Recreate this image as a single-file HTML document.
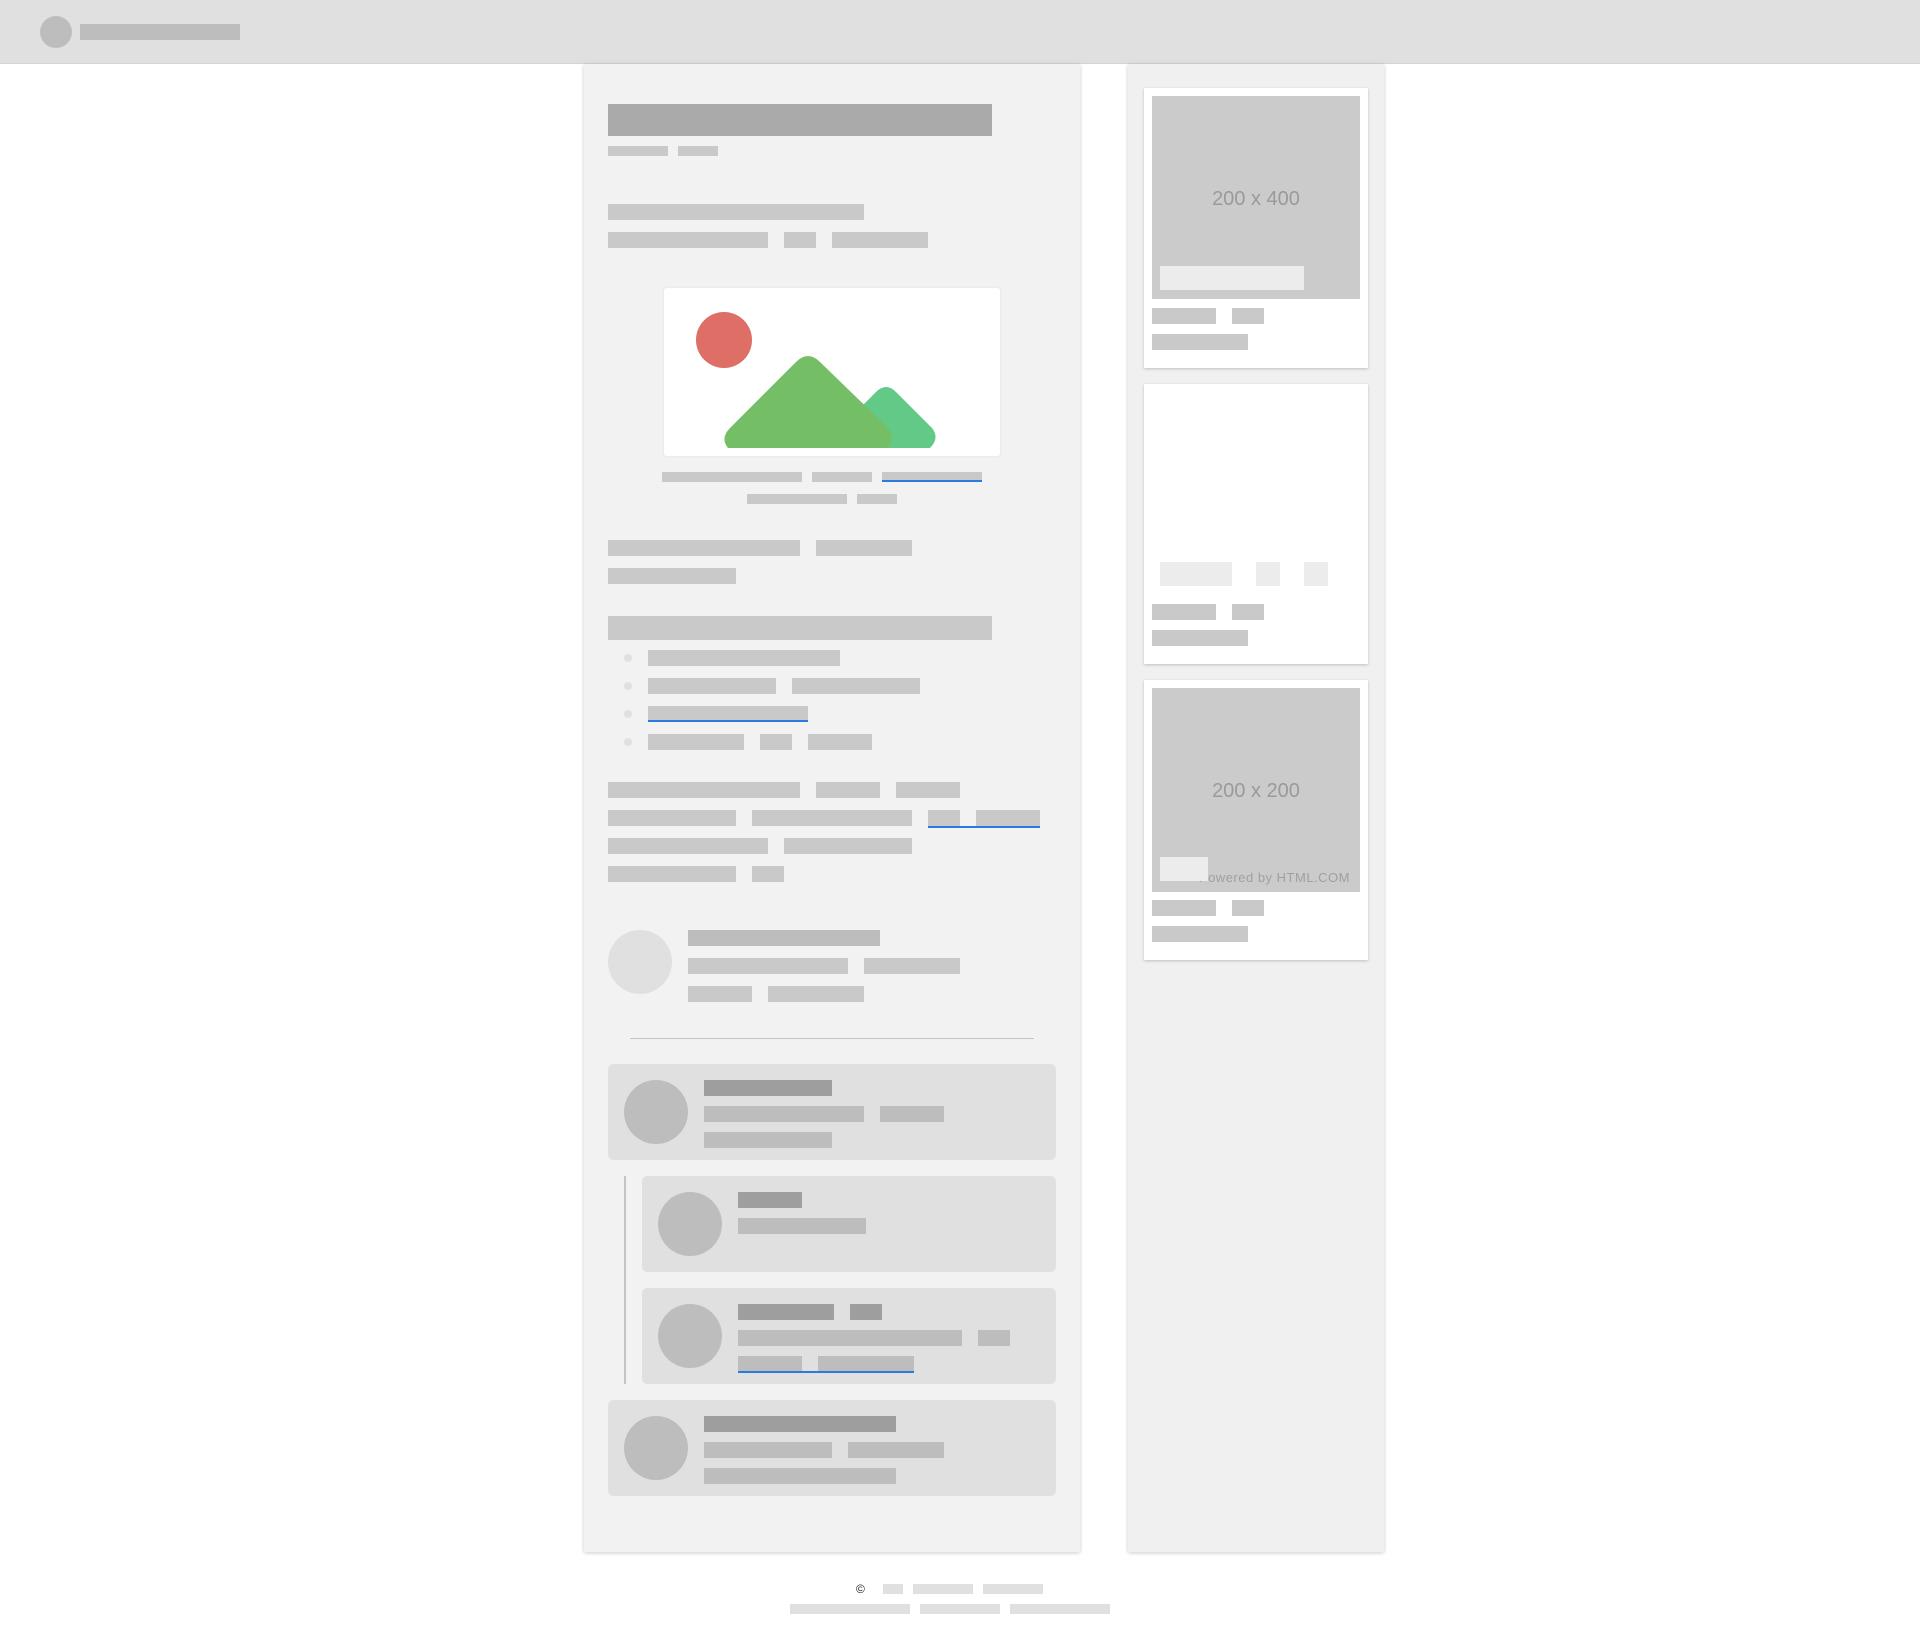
<!DOCTYPE html>
<html><head><meta charset="utf-8"><style>
*{margin:0;padding:0;box-sizing:border-box}
body{width:1920px;height:1646px;background:#fff;position:relative;overflow:hidden;font-family:"Liberation Sans",sans-serif}
div{position:absolute}
.b{background:#c9c9c9}
.d{background:#bdbdbd}
.k{background:#9e9e9e}
.l{background:#ececec}
.f{background:#e0e0e0}
.u{border-bottom:2px solid #2a7ae2}
.c{border-radius:50%}
.box{background:#e0e0e0;border-radius:5px}
.card{background:#fff;box-shadow:0 1px 3px rgba(0,0,0,.2)}
.ph{background:#cbcbcb;color:#9a9a9a;font-size:20px;text-align:center;line-height:206px}
</style></head><body>
<div style="left:0;top:0;width:1920px;height:64px;background:#e0e0e0;border-bottom:1px solid #d4d4d4"></div>
<div class="c d" style="left:40px;top:16px;width:32px;height:32px"></div>
<div class="d" style="left:80px;top:24px;width:160px;height:16px"></div>

<div style="left:584px;top:64px;width:496px;height:1488px;background:#f2f2f2;box-shadow:0 1px 4px rgba(0,0,0,.2)"></div>
<div style="left:1128px;top:64px;width:256px;height:1488px;background:#f0f0f0;box-shadow:0 1px 4px rgba(0,0,0,.2)"></div>

<div style="left:608px;top:104px;width:384px;height:32px;background:#aaa"></div>
<div class="b" style="left:608px;top:146px;width:60px;height:10px"></div>
<div class="b" style="left:678px;top:146px;width:40px;height:10px"></div>

<div class="b" style="left:608px;top:204px;width:256px;height:16px"></div>
<div class="b" style="left:608px;top:232px;width:160px;height:16px"></div>
<div class="b" style="left:784px;top:232px;width:32px;height:16px"></div>
<div class="b" style="left:832px;top:232px;width:96px;height:16px"></div>

<div style="left:664px;top:288px;width:336px;height:168px;background:#fff;border-radius:3px;box-shadow:0 0 3px rgba(0,0,0,.08)">
<svg width="336" height="168" viewBox="0 0 336 168">
<circle cx="60" cy="52" r="28" fill="#de6e66"/>
<path d="M190 160 L266 160 Q276 150 268 140 L232 104 Q222 94 212 104 L180 136 Z" fill="#62c987"/>
<path d="M64 160 L224 160 Q232 148 222 138 L156 74 Q144 62 132 74 L66 140 Q56 150 64 160 Z" fill="#74bf66"/>
</svg></div>
<div class="b" style="left:662px;top:472px;width:140px;height:10px"></div>
<div class="b" style="left:812px;top:472px;width:60px;height:10px"></div>
<div class="b u" style="left:882px;top:472px;width:100px;height:10px"></div>
<div class="b" style="left:747px;top:494px;width:100px;height:10px"></div>
<div class="b" style="left:857px;top:494px;width:40px;height:10px"></div>

<div class="b" style="left:608px;top:540px;width:192px;height:16px"></div>
<div class="b" style="left:816px;top:540px;width:96px;height:16px"></div>
<div class="b" style="left:608px;top:568px;width:128px;height:16px"></div>

<div class="b" style="left:608px;top:616px;width:384px;height:24px"></div>
<div class="c f" style="left:624px;top:654px;width:8px;height:8px"></div>
<div class="c f" style="left:624px;top:682px;width:8px;height:8px"></div>
<div class="c f" style="left:624px;top:710px;width:8px;height:8px"></div>
<div class="c f" style="left:624px;top:738px;width:8px;height:8px"></div>
<div class="b" style="left:648px;top:650px;width:192px;height:16px"></div>
<div class="b" style="left:648px;top:678px;width:128px;height:16px"></div>
<div class="b" style="left:792px;top:678px;width:128px;height:16px"></div>
<div class="b u" style="left:648px;top:706px;width:160px;height:16px"></div>
<div class="b" style="left:648px;top:734px;width:96px;height:16px"></div>
<div class="b" style="left:760px;top:734px;width:32px;height:16px"></div>
<div class="b" style="left:808px;top:734px;width:64px;height:16px"></div>

<div class="b" style="left:608px;top:782px;width:192px;height:16px"></div>
<div class="b" style="left:816px;top:782px;width:64px;height:16px"></div>
<div class="b" style="left:896px;top:782px;width:64px;height:16px"></div>
<div class="b" style="left:608px;top:810px;width:128px;height:16px"></div>
<div class="b" style="left:752px;top:810px;width:160px;height:16px"></div>
<div class="b" style="left:928px;top:810px;width:32px;height:16px"></div>
<div class="b" style="left:976px;top:810px;width:64px;height:16px"></div>
<div style="left:928px;top:826px;width:112px;height:2px;background:#2a7ae2"></div>
<div class="b" style="left:608px;top:838px;width:160px;height:16px"></div>
<div class="b" style="left:784px;top:838px;width:128px;height:16px"></div>
<div class="b" style="left:608px;top:866px;width:128px;height:16px"></div>
<div class="b" style="left:752px;top:866px;width:32px;height:16px"></div>

<div class="c f" style="left:608px;top:930px;width:64px;height:64px"></div>
<div class="d" style="left:688px;top:930px;width:192px;height:16px"></div>
<div class="b" style="left:688px;top:958px;width:160px;height:16px"></div>
<div class="b" style="left:864px;top:958px;width:96px;height:16px"></div>
<div class="b" style="left:688px;top:986px;width:64px;height:16px"></div>
<div class="b" style="left:768px;top:986px;width:96px;height:16px"></div>
<div style="left:630px;top:1038px;width:404px;height:1px;background:#c4c4c4"></div>

<div class="box" style="left:608px;top:1064px;width:448px;height:96px"></div>
<div class="c d" style="left:624px;top:1080px;width:64px;height:64px"></div>
<div class="k" style="left:704px;top:1080px;width:128px;height:16px"></div>
<div class="d" style="left:704px;top:1106px;width:160px;height:16px"></div>
<div class="d" style="left:880px;top:1106px;width:64px;height:16px"></div>
<div class="d" style="left:704px;top:1132px;width:128px;height:16px"></div>

<div style="left:624px;top:1176px;width:2px;height:208px;background:#c4c4c4"></div>
<div class="box" style="left:642px;top:1176px;width:414px;height:96px"></div>
<div class="c d" style="left:658px;top:1192px;width:64px;height:64px"></div>
<div class="k" style="left:738px;top:1192px;width:64px;height:16px"></div>
<div class="d" style="left:738px;top:1218px;width:128px;height:16px"></div>

<div class="box" style="left:642px;top:1288px;width:414px;height:96px"></div>
<div class="c d" style="left:658px;top:1304px;width:64px;height:64px"></div>
<div class="k" style="left:738px;top:1304px;width:96px;height:16px"></div>
<div class="k" style="left:850px;top:1304px;width:32px;height:16px"></div>
<div class="d" style="left:738px;top:1330px;width:224px;height:16px"></div>
<div class="d" style="left:978px;top:1330px;width:32px;height:16px"></div>
<div class="d" style="left:738px;top:1356px;width:64px;height:16px"></div>
<div class="d" style="left:818px;top:1356px;width:96px;height:16px"></div>
<div style="left:738px;top:1371px;width:176px;height:2px;background:#2a7ae2"></div>

<div class="box" style="left:608px;top:1400px;width:448px;height:96px"></div>
<div class="c d" style="left:624px;top:1416px;width:64px;height:64px"></div>
<div class="k" style="left:704px;top:1416px;width:192px;height:16px"></div>
<div class="d" style="left:704px;top:1442px;width:128px;height:16px"></div>
<div class="d" style="left:848px;top:1442px;width:96px;height:16px"></div>
<div class="d" style="left:704px;top:1468px;width:192px;height:16px"></div>

<!-- sidebar cards -->
<div class="card" style="left:1144px;top:88px;width:224px;height:280px"></div>
<div class="ph" style="left:1152px;top:96px;width:208px;height:203px">200 x 400</div>
<div class="l" style="left:1160px;top:266px;width:144px;height:24px"></div>
<div class="b" style="left:1152px;top:308px;width:64px;height:16px"></div>
<div class="b" style="left:1232px;top:308px;width:32px;height:16px"></div>
<div class="b" style="left:1152px;top:334px;width:96px;height:16px"></div>

<div class="card" style="left:1144px;top:384px;width:224px;height:280px"></div>
<div class="l" style="left:1160px;top:562px;width:72px;height:24px"></div>
<div class="l" style="left:1256px;top:562px;width:24px;height:24px"></div>
<div class="l" style="left:1304px;top:562px;width:24px;height:24px"></div>
<div class="b" style="left:1152px;top:604px;width:64px;height:16px"></div>
<div class="b" style="left:1232px;top:604px;width:32px;height:16px"></div>
<div class="b" style="left:1152px;top:630px;width:96px;height:16px"></div>

<div class="card" style="left:1144px;top:680px;width:224px;height:280px"></div>
<div class="ph" style="left:1152px;top:688px;width:208px;height:204px">200 x 200</div>
<div style="left:1170px;top:870px;width:180px;text-align:right;font-size:13px;color:#a0a0a0;letter-spacing:0.5px">Powered by HTML.COM</div>
<div class="l" style="left:1160px;top:857px;width:48px;height:24px"></div>
<div class="b" style="left:1152px;top:900px;width:64px;height:16px"></div>
<div class="b" style="left:1232px;top:900px;width:32px;height:16px"></div>
<div class="b" style="left:1152px;top:926px;width:96px;height:16px"></div>

<div style="left:856px;top:1582px;font-size:12px;color:#222">©</div>
<div class="f" style="left:883px;top:1584px;width:20px;height:10px"></div>
<div class="f" style="left:913px;top:1584px;width:60px;height:10px"></div>
<div class="f" style="left:983px;top:1584px;width:60px;height:10px"></div>
<div class="f" style="left:790px;top:1604px;width:120px;height:10px"></div>
<div class="f" style="left:920px;top:1604px;width:80px;height:10px"></div>
<div class="f" style="left:1010px;top:1604px;width:100px;height:10px"></div>
</body></html>
